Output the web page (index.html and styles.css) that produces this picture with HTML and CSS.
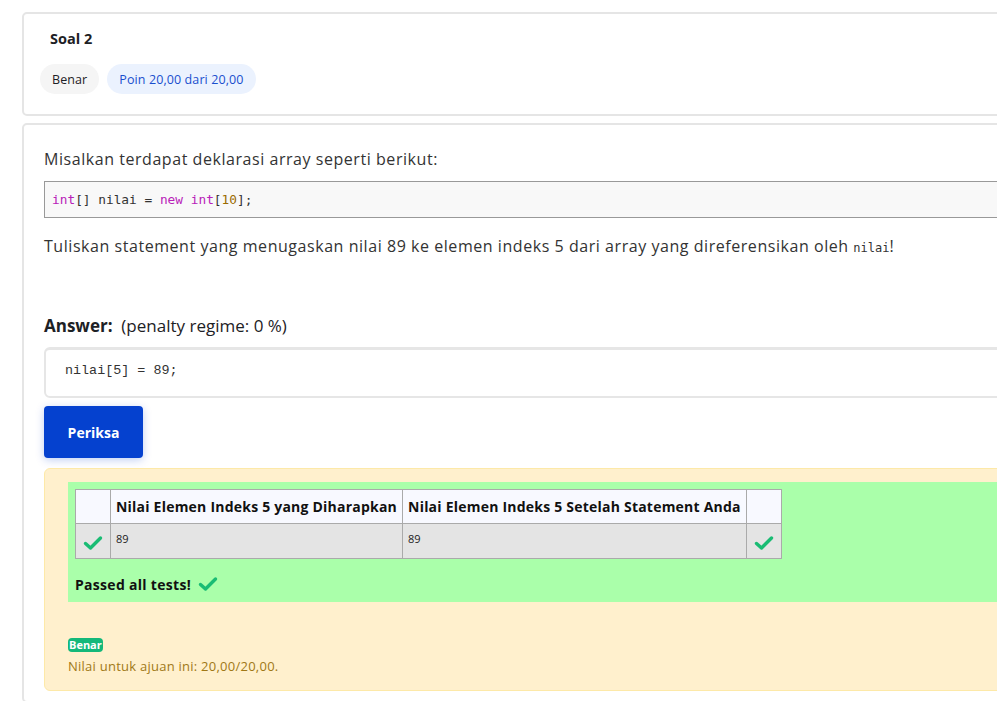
FILE: index.html
```html
<!DOCTYPE html>
<html>
<head>
<meta charset="utf-8">
<link rel="stylesheet" href="styles.css">
</head>
<body>
<div class="page">
  <div class="card info">
    <h3 class="qno">Soal 2</h3>
    <div class="badges">
      <span class="badge grey">Benar</span>
      <span class="badge blue">Poin 20,00 dari 20,00</span>
    </div>
  </div>
  <div class="card content">
    <p class="para">Misalkan terdapat deklarasi array seperti berikut:</p>
    <pre class="code"><span class="kw">int</span>[] nilai = <span class="kw">new</span> <span class="kw">int</span>[<span class="num">10</span>];</pre>
    <p class="para">Tuliskan statement yang menugaskan nilai 89 ke elemen indeks 5 dari array yang direferensikan oleh <code class="inline">nilai</code>!</p>
    <div class="answer-label"><b>Answer:</b>&nbsp; (penalty regime: 0 %)</div>
    <div class="answer-box">nilai[5] = 89;</div>
    <button class="btn">Periksa</button>
    <div class="feedback">
      <div class="results">
        <table class="tests">
          <thead>
            <tr><th class="ic"></th><th>Nilai Elemen Indeks 5 yang Diharapkan</th><th>Nilai Elemen Indeks 5 Setelah Statement Anda</th><th class="ic"></th></tr>
          </thead>
          <tbody>
            <tr>
              <td class="ic"><svg width="20" height="16" viewBox="0 0 20 16"><path d="M2.5 8.5 L7.5 13 L17.5 3" fill="none" stroke="#1abc74" stroke-width="3.4" stroke-linecap="round" stroke-linejoin="round"/></svg></td>
              <td class="val">89</td>
              <td class="val">89</td>
              <td class="ic"><svg width="20" height="16" viewBox="0 0 20 16"><path d="M2.5 8.5 L7.5 13 L17.5 3" fill="none" stroke="#1abc74" stroke-width="3.4" stroke-linecap="round" stroke-linejoin="round"/></svg></td>
            </tr>
          </tbody>
        </table>
        <div class="passed">Passed all tests! <svg width="20" height="16" viewBox="0 0 20 16"><path d="M2.5 8.5 L7.5 13 L17.5 3" fill="none" stroke="#1abc74" stroke-width="3.4" stroke-linecap="round" stroke-linejoin="round"/></svg></div>
      </div>
      <div class="outcome">
        <span class="ok">Benar</span>
        <div class="grade">Nilai untuk ajuan ini: 20,00/20,00.</div>
      </div>
    </div>
  </div>
</div>
</body>
</html>
```

FILE: styles.css
```css
html, body {
  margin: 0;
  padding: 0;
  background: #fff;
  overflow: hidden;
}
body {
  font-family: "Open Sans", "DejaVu Sans", sans-serif;
  color: #1d2125;
}
.page {
  padding: 12px 0 0 22px;
  width: 1010px;
}
.card {
  border: 2px solid #e5e5e5;
  border-radius: 5px;
  background: #fff;
  margin-bottom: 7px;
}
.info {
  padding: 0 0 0 16px;
  box-sizing: border-box;
  height: 104px;
}
.qno {
  margin: 0;
  padding: 15px 0 0 10px;
  font-size: 14.5px;
  font-weight: 700;
  line-height: 20px;
  height: 35px;
  color: #1d2125;
}
.badges {
  display: flex;
  gap: 8px;
}
.badge {
  display: inline-flex;
  align-items: center;
  height: 30px;
  border-radius: 15px;
  padding: 0 12px;
  font-size: 12.5px;
  letter-spacing: 0.1px;
}
.badge.grey { background: #f5f5f5; color: #1d2125; }
.badge.blue { background: #ebf2fe; color: #1a4fce; }
.content {
  padding: 22px 0 10px 20px;
}
.para {
  margin: 0;
  font-size: 16px;
  line-height: 24px;
  color: #333;
  letter-spacing: 0.55px;
}
.code {
  margin: 10px 0 16px 0;
  background: #f8f8f8;
  border: 1px solid #999;
  padding: 0 7px;
  height: 35px;
  line-height: 35px;
  font-family: "DejaVu Sans Mono", monospace;
  font-size: 12.8px;
  color: #333;
  letter-spacing: 0;
}
.kw { color: #b822b8; }
.num { color: #9a6a00; }
.inline {
  font-family: "DejaVu Sans Mono", monospace;
  font-size: 12px;
  color: #333;
  letter-spacing: 0;
}
.answer-label {
  margin-top: 54px;
  font-size: 17px;
  line-height: 24px;
  color: #1d2125;
}
.answer-label b { font-weight: 700; }
.answer-box {
  margin-top: 9px;
  height: 51px;
  box-sizing: border-box;
  border: 2px solid #e6e6e6;
  border-top-width: 3px;
  border-radius: 6px;
  padding: 13px 0 0 19px;
  font-family: "Liberation Mono", monospace;
  font-size: 13.4px;
  color: #333;
}
.btn {
  display: block;
  margin-top: 8px;
  width: 99px;
  height: 52px;
  border: none;
  border-radius: 4px;
  background: #0541cf;
  color: #fff;
  font-family: inherit;
  font-size: 14px;
  font-weight: 700;
  box-shadow: 0 2px 8px rgba(5, 65, 207, 0.25);
}
.feedback {
  margin-top: 10px;
  background: #fff0cd;
  border: 1px solid #fde9a8;
  border-radius: 6px;
  padding: 13px 0 15px 23px;
}
.results {
  background: #aaffaa;
  padding: 7px 0 6px 7px;
}
.tests {
  border-collapse: collapse;
}
.tests th, .tests td {
  border: 1px solid #aaa;
}
.tests th {
  background: #f8f9ff;
  font-size: 14px;
  font-weight: 700;
  height: 33px;
  padding: 0 5px;
  white-space: nowrap;
  text-align: left;
  color: #111;
  letter-spacing: 0.22px;
}
.tests td {
  background: #e4e4e4;
  height: 35px;
  box-sizing: border-box;
}
.tests .ic {
  width: 24px;
  padding: 0 5px;
  text-align: center;
  vertical-align: middle;
}
.tests td.ic svg { display: block; margin: 3px auto 0; }
.tests td.val {
  vertical-align: top;
  font-size: 11px;
  line-height: 14px;
  padding: 8px 5px 0;
  color: #222;
}
.passed {
  margin-top: 13px;
  font-size: 14px;
  font-weight: 700;
  color: #111;
  display: flex;
  align-items: center;
  gap: 7px;
  height: 24px;
  letter-spacing: 0.3px;
}
.outcome {
  margin-top: 30px;
}
.ok {
  display: inline-block;
  background: #14b87a;
  color: #fff;
  font-size: 11px;
  font-weight: 700;
  padding: 0 1px;
  border-radius: 4px;
  line-height: 14px;
}
.grade {
  margin-top: 3px;
  font-size: 13px;
  color: #a07816;
  letter-spacing: 0.25px;
}
```
